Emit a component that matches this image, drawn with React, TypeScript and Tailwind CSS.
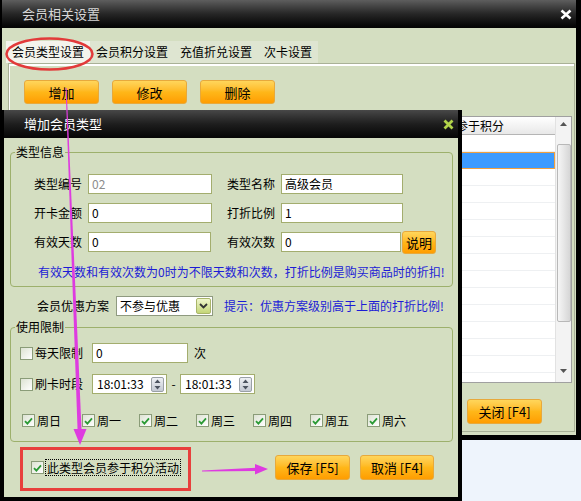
import type { ReactNode } from 'react'

const WEEK = ['周日', '周一', '周二', '周三', '周四', '周五', '周六']
// columns hidden behind the dialog: kept as empty cells
const COLS = ['c1', 'c2', 'c3', 'c4', 'c5', 'c6']

function Box({ checked }: { checked?: boolean }) {
  return (
    <span className="flex h-[13px] w-[13px] shrink-0 items-center justify-center border border-[#8a9c78] bg-linear-to-br from-[#dde3d3] to-white">
      {checked && (
        <svg width="9" height="8" viewBox="0 0 9 8">
          <path d="M1 4.2 3.4 6.6 8 1.4" fill="none" stroke="#2a9a34" strokeWidth="1.8" />
        </svg>
      )}
    </span>
  )
}

function OrangeBtn({ children, className = '' }: { children: ReactNode; className?: string }) {
  return (
    <div
      className={`flex shrink-0 items-center justify-center rounded-[3px] border border-[#e7a93c] bg-linear-to-b from-[#ffd65a] via-[#ffb718] to-[#ff9d00] text-[13px] leading-none text-black ${className}`}
    >
      {children}
    </div>
  )
}

function Input({ value, className = '', muted }: { value: string; className?: string; muted?: boolean }) {
  return (
    <div
      className={`flex h-[20px] shrink-0 items-center border border-[#a3ad6e] bg-white pl-[3px] text-[12px] ${muted ? 'text-[#8c8c8c]' : 'text-black'} ${className}`}
    >
      {value}
    </div>
  )
}

function TimeBox({ value }: { value: string }) {
  return (
    <div className="flex h-[20px] w-[75px] shrink-0 items-center justify-between border border-[#a3ad6e] bg-white pl-[4px] pr-[2px] text-[12px]">
      <span>{value}</span>
      <span className="flex h-[15px] w-[13px] items-center justify-center rounded-[2px] border border-[#9aa0a6] bg-linear-to-b from-[#eef0f4] to-[#c5cad3]">
        <svg width="7" height="11" viewBox="0 0 7 11">
          <path d="M3.5 0.5 6.5 4H0.5Z M3.5 10.5 6.5 7H0.5Z" fill="#4d5460" />
        </svg>
      </span>
    </div>
  )
}

export default function App() {
  return (
    <div className="relative h-[501px] w-[581px] overflow-hidden bg-[#eef4fc] font-['SimSun','Noto_Sans_CJK_SC',sans-serif] text-[12px] text-black">
      {/* 会员相关设置 window */}
      <div className="absolute left-0 top-0 flex h-[440px] w-[581px] flex-col border-b-[5px] border-l-[2px] border-r-[5px] border-black bg-[#d4dec1]">
        <div className="flex h-[28px] shrink-0 items-center justify-between bg-linear-to-b from-[#5e5e5e] via-[#262626] to-[#040404] pl-[20px] pr-[4px]">
          <span className="text-[13px] text-[#d6d6d6]">会员相关设置</span>
          <svg width="12" height="11" viewBox="0 0 12 11">
            <path d="M1.5 1.5 10.5 9.5 M10.5 1.5 1.5 9.5" stroke="#fff" strokeWidth="2.6" />
          </svg>
        </div>

        <div className="flex flex-1 flex-col pl-[4px] pt-[13px]">
          <div className="flex h-[22px] items-stretch">
            <div className="flex items-center bg-[#f3f4ec] px-[6px]">会员类型设置</div>
            <div className="flex items-center bg-[#dee5d1] px-[6px]">会员积分设置</div>
            <div className="flex items-center bg-[#dee5d1] px-[6px]">充值折兑设置</div>
            <div className="flex items-center bg-[#dee5d1] px-[6px]">次卡设置</div>
          </div>

          <div className="mb-[3px] ml-[2px] flex w-[567px] flex-1 flex-col border border-[#a9b197] shadow-[inset_1px_2px_0_#ffffff]">
            <div className="flex gap-[13px] pl-[15px] pt-[16px]">
              <OrangeBtn className="h-[24px] w-[75px]">增加</OrangeBtn>
              <OrangeBtn className="h-[24px] w-[75px]">修改</OrangeBtn>
              <OrangeBtn className="h-[24px] w-[75px]">删除</OrangeBtn>
            </div>

            <div className="mx-[2px] mt-[12px] flex h-[267px] border border-[#a0a0a0] bg-white">
              <div className="flex flex-1 flex-col">
                <div className="flex h-[18px] shrink-0 border-b border-[#b5b5b5] bg-linear-to-b from-white to-[#e8e8e8]">
                  {COLS.map((c) => (
                    <div key={c} className="flex-1 border-r border-[#c8c8c8]" />
                  ))}
                  <div className="w-[100px] pl-[1px] leading-[18px]">参于积分</div>
                </div>
                {Array.from({ length: 14 }).map((_, i) => (
                  <div
                    key={i}
                    className={
                      i === 1
                        ? 'h-[17px] shrink-0 border border-[#f0a040] bg-[#3d9bff]'
                        : 'h-[17px] shrink-0 border-b border-[#eef0f2]'
                    }
                  />
                ))}
              </div>
              <div className="flex w-[16px] shrink-0 flex-col items-center border-l border-[#e2e2e2] bg-[#f3f3f3]">
                <svg className="mt-[5px]" width="7" height="4" viewBox="0 0 7 4">
                  <path d="M3.5 0 7 4H0Z" fill="#555" />
                </svg>
                <div className="mt-[18px] h-[178px] w-[14px] rounded-[2px] border border-[#b8b8b8] bg-linear-to-r from-[#f6f6f6] to-[#d6d6d6]" />
                <svg className="mb-[9px] mt-auto" width="7" height="4" viewBox="0 0 7 4">
                  <path d="M0 0H7L3.5 4Z" fill="#555" />
                </svg>
              </div>
            </div>

            <OrangeBtn className="mr-[32px] mt-[16px] h-[25px] w-[75px] self-end">关闭 [F4]</OrangeBtn>
          </div>
        </div>
      </div>

      {/* 增加会员类型 dialog */}
      <div className="absolute left-0 top-[110px] flex h-[391px] w-[462px] flex-col border-x-4 border-b-4 border-black bg-[#d4dec1]">
        <div className="flex h-[28px] shrink-0 items-center justify-between bg-linear-to-b from-[#484848] via-[#1e1e1e] to-[#060606] pl-[20px] pr-[4px]">
          <span className="text-[13px] text-white">增加会员类型</span>
          <svg width="11" height="11" viewBox="0 0 11 11">
            <path d="M1.5 1.5 9.5 9.5 M9.5 1.5 1.5 9.5" stroke="#b2d44a" strokeWidth="2.8" />
          </svg>
        </div>

        <div className="flex flex-col px-[6px] pt-[7px]">
          <fieldset className="w-[443px] rounded-[4px] border border-[#9db06c] px-0 pb-[6px]">
            <legend className="ml-[4px] px-[1px] leading-[14px]">类型信息</legend>
            <div className="flex flex-col gap-[9px] pl-[23px] pt-[15px]">
              <div className="flex h-[20px] items-center">
                <span className="w-[48px] shrink-0">类型编号</span>
                <Input value="02" muted className="ml-[6px] w-[124px]" />
                <span className="ml-[15px] w-[48px] shrink-0">类型名称</span>
                <Input value="高级会员" className="ml-[6px] w-[122px]" />
              </div>
              <div className="flex h-[20px] items-center">
                <span className="w-[48px] shrink-0">开卡金额</span>
                <Input value="0" className="ml-[6px] w-[124px]" />
                <span className="ml-[15px] w-[48px] shrink-0">打折比例</span>
                <Input value="1" className="ml-[6px] w-[122px]" />
              </div>
              <div className="flex h-[20px] items-center">
                <span className="w-[48px] shrink-0">有效天数</span>
                <Input value="0" className="ml-[6px] w-[123px]" />
                <span className="ml-[16px] w-[48px] shrink-0">有效次数</span>
                <Input value="0" className="ml-[6px] w-[120px]" />
                <OrangeBtn className="ml-[1px] h-[23px] w-[34px]">说明</OrangeBtn>
              </div>
            </div>
            <div className="mt-[12px] pl-[27px] leading-[16px] text-[#1c1cd6]">
              有效天数和有效次数为0时为不限天数和次数，打折比例是购买商品时的折扣!
            </div>
          </fieldset>

          <div className="mt-[9px] flex h-[20px] items-center pl-[27px]">
            <span className="w-[72px] shrink-0">会员优惠方案</span>
            <div className="ml-[7px] flex h-[20px] w-[97px] shrink-0 items-center justify-between border border-[#8f9a80] bg-white pl-[3px] pr-[1px]">
              <span>不参与优惠</span>
              <span className="flex h-[16px] w-[15px] items-center justify-center rounded-[2px] border border-[#a9b56a] bg-linear-to-b from-[#f0f6cc] to-[#c4d676]">
                <svg width="9" height="6" viewBox="0 0 9 6">
                  <path d="M1 1 4.5 4.5 8 1" stroke="#333" strokeWidth="1.8" fill="none" />
                </svg>
              </span>
            </div>
            <span className="ml-[11px] text-[#1c1cd6]">提示：优惠方案级别高于上面的打折比例!</span>
          </div>

          <fieldset className="mt-[4px] w-[443px] rounded-[4px] border border-[#9db06c] px-0 pb-[14px]">
            <legend className="ml-[4px] px-[1px] leading-[14px]">使用限制</legend>
            <div className="flex flex-col pl-[9px] pt-[9px]">
              <div className="flex h-[20px] items-center">
                <Box />
                <span className="ml-[2px] w-[48px] shrink-0">每天限制</span>
                <Input value="0" className="ml-[9px] w-[96px]" />
                <span className="ml-[6px]">次</span>
              </div>
              <div className="mt-[11px] flex h-[20px] items-center">
                <Box />
                <span className="ml-[2px] w-[48px] shrink-0">刷卡时段</span>
                <div className="ml-[9px]">
                  <TimeBox value="18:01:33" />
                </div>
                <span className="w-[13px] text-center">-</span>
                <TimeBox value="18:01:33" />
              </div>
              <div className="ml-[2px] mt-[20px] flex h-[13px] items-center">
                {WEEK.map((d, i) => (
                  <div key={d} className={i === 0 ? 'flex w-[60px] items-center' : 'flex w-[57px] items-center'}>
                    <Box checked />
                    <span className="ml-[2px]">{d}</span>
                  </div>
                ))}
              </div>
            </div>
          </fieldset>

          <div className="mt-[13px] flex h-[25px] items-center pl-[21px]">
            <div className="flex w-[244px] shrink-0 items-center">
              <Box checked />
              <span className="ml-[1px] border border-dotted border-black px-[1px] leading-[15px]">此类型会员参于积分活动</span>
            </div>
            <OrangeBtn className="h-[25px] w-[75px]">保存 [F5]</OrangeBtn>
            <OrangeBtn className="ml-[10px] h-[25px] w-[74px]">取消 [F4]</OrangeBtn>
          </div>
        </div>
      </div>

      {/* annotations */}
      <svg className="pointer-events-none absolute left-0 top-0" width="581" height="501" viewBox="0 0 581 501">
        <ellipse cx="49.5" cy="54" rx="43" ry="15.5" fill="none" stroke="#e23a3a" strokeWidth="2.5" />
        <rect x="21.5" y="448.5" width="168" height="41" fill="none" stroke="#e8403c" strokeWidth="3" />
        <polygon points="65.6,88 66.6,88 81.6,431 77.6,431" fill="#de3be0" />
        <polygon points="73.5,429 86.5,429 80,445" fill="#de3be0" />
        <polygon points="202,470.4 202,471.6 257,471 257,467.6" fill="#de3be0" />
        <polygon points="255,464 255,474.5 268,469" fill="#de3be0" />
      </svg>
    </div>
  )
}
